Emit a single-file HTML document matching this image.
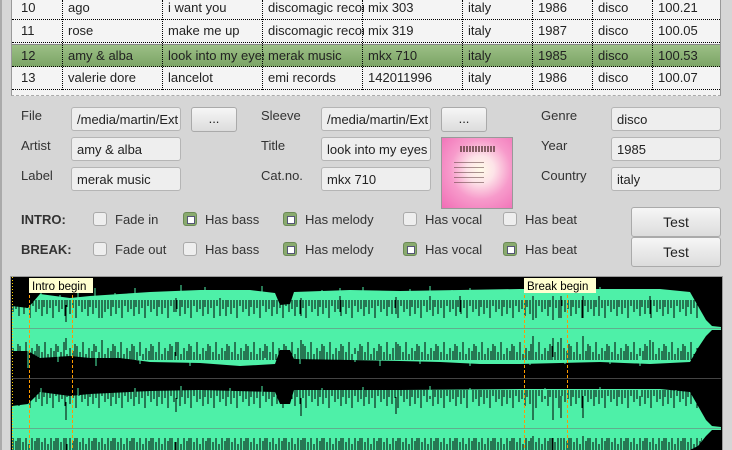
<!DOCTYPE html>
<html><head><meta charset="utf-8"><style>
*{margin:0;padding:0;box-sizing:border-box}
body{width:732px;height:450px;overflow:hidden;background:#d6d6d6;font-family:"Liberation Sans",sans-serif;font-size:13px;color:#222;position:relative}
.a{position:absolute}
.tbl{left:11px;top:0;width:710px;height:96px;background:#f4f4f4;border:1px solid #999;border-top:none;border-bottom:1px dashed #aaa}
.row{position:absolute;left:0;width:708px;height:23px;border-bottom:1px dotted #000}
.row span{position:absolute;top:3px;white-space:nowrap;overflow:hidden}
.sel{background:linear-gradient(#9cbf86,#7ca566)}
.vl{position:absolute;top:0;height:90px;border-left:1px dotted #000}
.lbl{position:absolute;font-size:13px;color:#333}
.inp{position:absolute;height:24px;width:110px;border:1px solid #b5b5b5;border-radius:3px;background:#eee;padding:4px 5px;white-space:nowrap;overflow:hidden;color:#222}
.btn{position:absolute;border:1px solid #aaa;border-radius:3px;background:linear-gradient(#f6f6f6,#dcdcdc);text-align:center}
.cb{position:absolute;width:14px;height:14px;border:1px solid #aaa;border-radius:3px;background:#eee}
.cb.on{background:#8aab6f;border-color:#6b8a55}
.cb.on::after{content:"";position:absolute;left:3px;top:3px;width:6px;height:6px;background:#fff;border:1px solid #557}
.cl{position:absolute;font-size:13px;color:#333}
b{font-weight:bold}
</style></head><body>
<div class="a" style="left:0;top:0;width:2px;height:450px;background:#aaa"></div>
<div class="a tbl">
 <div class="row" style="top:-3px"><span style="left:9px">10</span><span style="left:56px">ago</span><span style="left:156px">i want you</span><span style="left:256px;width:96px">discomagic records</span><span style="left:356px">mix 303</span><span style="left:456px">italy</span><span style="left:526px">1986</span><span style="left:586px">disco</span><span style="left:646px">100.21</span></div>
 <div class="row" style="top:20px"><span style="left:9px">11</span><span style="left:56px">rose</span><span style="left:156px">make me up</span><span style="left:256px;width:96px">discomagic records</span><span style="left:356px">mix 319</span><span style="left:456px">italy</span><span style="left:526px">1987</span><span style="left:586px">disco</span><span style="left:646px">100.05</span></div>
 <div class="row sel" style="top:44px;border-top:1px solid #888"><span style="left:9px">12</span><span style="left:56px">amy &amp; alba</span><span style="left:156px;width:96px">look into my eyes</span><span style="left:256px">merak music</span><span style="left:356px">mkx 710</span><span style="left:456px">italy</span><span style="left:526px">1985</span><span style="left:586px">disco</span><span style="left:646px">100.53</span></div>
 <div class="row" style="top:67px"><span style="left:9px">13</span><span style="left:56px">valerie dore</span><span style="left:156px">lancelot</span><span style="left:256px">emi records</span><span style="left:356px">142011996</span><span style="left:456px">italy</span><span style="left:526px">1986</span><span style="left:586px">disco</span><span style="left:646px">100.07</span></div>
 <div class="vl" style="left:50px"></div><div class="vl" style="left:150px"></div><div class="vl" style="left:250px"></div><div class="vl" style="left:350px"></div><div class="vl" style="left:450px"></div><div class="vl" style="left:520px"></div><div class="vl" style="left:580px"></div><div class="vl" style="left:640px"></div>
</div>
<div class="lbl" style="left:21px;top:108px">File</div>
<div class="lbl" style="left:21px;top:138px">Artist</div>
<div class="lbl" style="left:21px;top:168px">Label</div>
<div class="inp" style="left:71px;top:107px">/media/martin/Ext</div>
<div class="inp" style="left:71px;top:137px">amy &amp; alba</div>
<div class="inp" style="left:71px;top:167px">merak music</div>
<div class="btn" style="left:191px;top:107px;width:46px;height:25px;line-height:22px">...</div>
<div class="lbl" style="left:261px;top:108px">Sleeve</div>
<div class="lbl" style="left:261px;top:138px">Title</div>
<div class="lbl" style="left:261px;top:168px">Cat.no.</div>
<div class="inp" style="left:321px;top:107px">/media/martin/Ext</div>
<div class="inp" style="left:321px;top:137px">look into my eyes</div>
<div class="inp" style="left:321px;top:167px">mkx 710</div>
<div class="btn" style="left:441px;top:107px;width:46px;height:25px;line-height:22px">...</div>
<div class="a" style="left:441px;top:137px;width:72px;height:72px;border:1px solid #999;background:radial-gradient(circle at 55% 45%,#fffbe8 0,#fde3e8 25%,#f79bcb 55%,#f06cb5 100%)">
 <div class="a" style="left:18px;top:8px;width:36px;height:6px;background:repeating-linear-gradient(90deg,#533 0 2px,transparent 2px 3px);opacity:.7"></div>
 <div class="a" style="left:12px;top:24px;width:30px;height:22px;background:repeating-linear-gradient(#533 0 1px,transparent 1px 5px);opacity:.5"></div>
</div>
<div class="lbl" style="left:541px;top:108px">Genre</div>
<div class="lbl" style="left:541px;top:138px">Year</div>
<div class="lbl" style="left:541px;top:168px">Country</div>
<div class="inp" style="left:611px;top:107px">disco</div>
<div class="inp" style="left:611px;top:137px">1985</div>
<div class="inp" style="left:611px;top:167px">italy</div>

<div class="lbl" style="left:21px;top:212px"><b>INTRO:</b></div>
<div class="lbl" style="left:21px;top:242px"><b>BREAK:</b></div>
<div class="cb" style="left:93px;top:212px"></div><div class="cl" style="left:115px;top:212px">Fade in</div>
<div class="cb on" style="left:183px;top:212px"></div><div class="cl" style="left:205px;top:212px">Has bass</div>
<div class="cb on" style="left:283px;top:212px"></div><div class="cl" style="left:305px;top:212px">Has melody</div>
<div class="cb" style="left:403px;top:212px"></div><div class="cl" style="left:425px;top:212px">Has vocal</div>
<div class="cb" style="left:503px;top:212px"></div><div class="cl" style="left:525px;top:212px">Has beat</div>
<div class="cb" style="left:93px;top:242px"></div><div class="cl" style="left:115px;top:242px">Fade out</div>
<div class="cb" style="left:183px;top:242px"></div><div class="cl" style="left:205px;top:242px">Has bass</div>
<div class="cb on" style="left:283px;top:242px"></div><div class="cl" style="left:305px;top:242px">Has melody</div>
<div class="cb on" style="left:403px;top:242px"></div><div class="cl" style="left:425px;top:242px">Has vocal</div>
<div class="cb on" style="left:503px;top:242px"></div><div class="cl" style="left:525px;top:242px">Has beat</div>
<div class="btn" style="left:631px;top:207px;width:90px;height:30px;line-height:28px;font-size:14px">Test</div>
<div class="btn" style="left:631px;top:237px;width:90px;height:30px;line-height:28px;font-size:14px">Test</div>

<svg class="a" style="left:11px;top:277px" width="711" height="173" viewBox="11 277 711 173">
<defs>
<pattern id="pt" x="0" y="0" width="23" height="30" patternUnits="userSpaceOnUse">
<path d="M1 0V14M4 0V8M7 0V18M10 0V6M13 0V12M16 0V9M19 0V16M21 0V7" stroke="#000" stroke-width="1"/>
</pattern>
<pattern id="pb" x="0" y="0" width="19" height="30" patternUnits="userSpaceOnUse">
<path d="M1 30V16M4 30V22M7 30V12M10 30V24M13 30V18M16 30V21M18 30V14" stroke="#000" stroke-width="1"/>
</pattern>
</defs>
<rect x="11" y="277" width="711" height="173" fill="#000"/>
<g fill="#4ef0a8">
<polygon points="12,306 28,308 40,294 70,298 90,296 120,294 150,292 200,290 250,290 275,293 280,305 290,304 294,292 350,290 400,291 460,290 520,289 600,289 660,289 690,292 698,306 706,320 712,326 721,327 721,330 712,330 706,336 698,348 690,362 650,364 600,362 560,363 520,364 480,364 440,362 400,361 350,360 294,359 290,350 280,350 275,364 240,366 200,363 150,362 120,358 90,358 70,356 40,358 28,351 12,351"/>
<polygon points="12,406 28,404 40,392 70,396 90,394 150,391 200,390 275,392 280,404 290,404 294,390 400,390 520,389 660,389 690,392 698,406 706,420 712,426 721,427 721,430 712,430 706,436 698,446 690,450 12,450"/>
</g>
<rect x="12" y="288" width="690" height="30" fill="url(#pt)"/>
<rect x="12" y="338" width="690" height="30" fill="url(#pb)"/>
<rect x="12" y="387" width="690" height="30" fill="url(#pt)"/>
<rect x="12" y="438" width="690" height="30" fill="url(#pb)"/>
<g stroke="#4ef0a8" stroke-width="1">
<path d="M41 292V300M60 295V305M78 291V302M95 288V300M115 293V302M135 288V300M162 292V300M181 285V298M205 287V296M230 292V296M248 290V296M262 286V298M300 292V298M322 290V296M340 288V297M363 287V296M385 292V297M410 289V297M430 286V296M452 290V296M470 288V296M495 292V296M505 293V296M545 288V296M575 290V296M600 287V296M620 292V296M640 289V296M660 290V296M676 292V298"/>
<path d="M28 345V368M58 352V362M96 352V366M140 356V364M190 357V366M240 358V366M265 358V362M300 353V364M355 354V362M380 355V366M420 356V364M470 358V366M530 357V365M565 357V364M610 356V364M640 356V366M670 357V363"/>
<path d="M41 388V400M78 388V402M135 388V398M181 386V398M230 388V396M262 386V398M322 388V396M363 387V396M430 386V396M470 388V396M545 388V396M600 387V396M640 389V396M676 390V398"/>
</g>
<g stroke="#000" stroke-width="1">
<path d="M66 305V322M102 302V318M176 298V312M220 298V316M301 298V316M340 296V312M396 297V314M430 296V310M460 296V312M533 296V320M553 296V320M561 296V318M583 296V318M599 296V316M650 296V314"/>
<path d="M66 338V350M102 340V352M176 342V356M301 340V353M396 342V355M533 336V358M553 338V357M561 338V357M583 336V356M650 340V356"/>
<path d="M66 402V420M176 398V412M301 398V416M396 397V414M533 396V420M553 396V420M561 396V418M583 396V418M533 436V450M553 438V450M561 438V450M583 436V450M66 438V450M176 442V450M301 440V450"/>
</g>
<line x1="12" y1="328.5" x2="721" y2="328.5" stroke="#5fae8e"/>
<line x1="12" y1="428.5" x2="721" y2="428.5" stroke="#5fae8e"/>
<line x1="12" y1="378.5" x2="721" y2="378.5" stroke="#444"/>
<line x1="12.5" y1="277" x2="12.5" y2="450" stroke="#ffd400" stroke-dasharray="1,2"/>
<g stroke="#ff9900" stroke-dasharray="3,2">
<line x1="29.5" y1="290" x2="29.5" y2="450"/><line x1="72.5" y1="290" x2="72.5" y2="450"/>
<line x1="524.5" y1="290" x2="524.5" y2="450"/><line x1="567.5" y1="290" x2="567.5" y2="450"/>
</g>
<rect x="29" y="278" width="64" height="15" fill="#ffffd0"/>
<text x="32" y="290" font-family="Liberation Sans" font-size="11.5" fill="#000">Intro begin</text>
<rect x="524" y="278" width="72" height="15" fill="#ffffd0"/>
<text x="527" y="290" font-family="Liberation Sans" font-size="11.5" fill="#000">Break begin</text>
</svg>
<div class="a" style="left:10px;top:276px;width:713px;height:174px;border:1px solid #999;border-bottom:none"></div>
</body></html>
